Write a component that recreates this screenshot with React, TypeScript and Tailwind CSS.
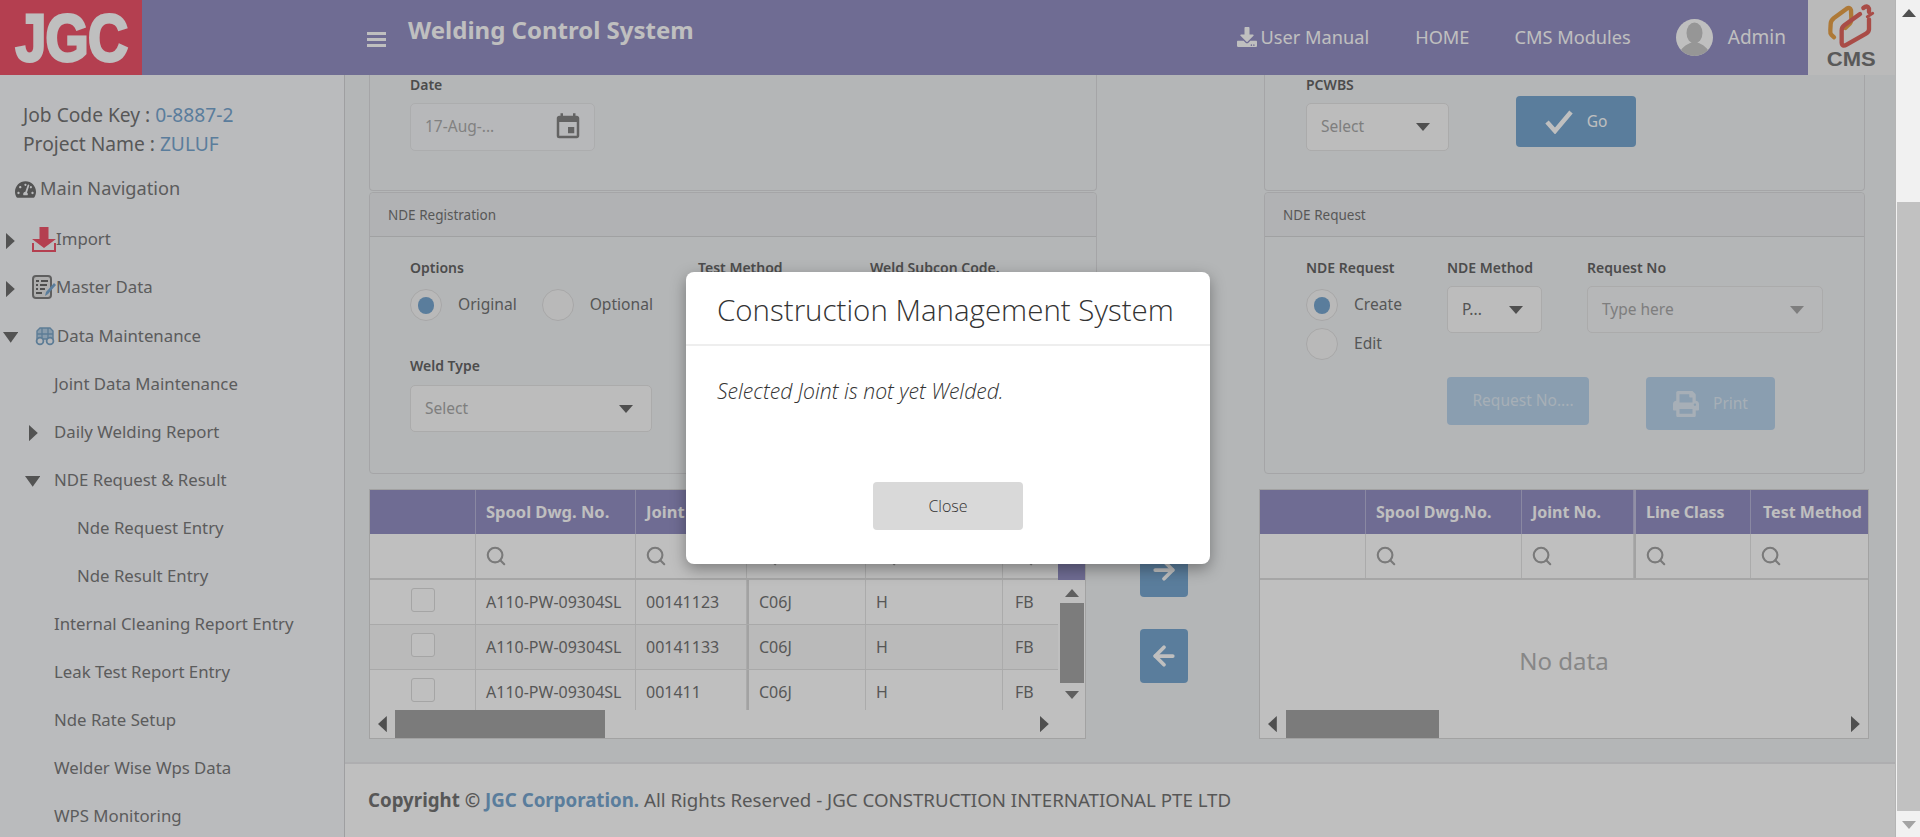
import React from "react";
import { FaTachometerAlt, FaDownload, FaPrint } from "react-icons/fa";
import { MdEvent } from "react-icons/md";
import { Search, ArrowLeft, ArrowRight } from "lucide-react";

const Tri = ({ dir, className, big }: { dir: "r" | "d" | "l" | "u"; className?: string; big?: boolean }) => {
  const pts = { r: "0,0 8,6 0,12", d: "0,0 14,0 7,8", l: "8,0 0,6 8,12", u: "7,0 14,8 0,8" }[dir];
  const w = dir === "r" || dir === "l" ? 8 : 14;
  const h = dir === "r" || dir === "l" ? 12 : 8;
  return (
    <svg width={big ? w * 1.1 : w} height={big ? h * 1.35 : h} viewBox={`0 0 ${w} ${h}`} preserveAspectRatio="none" className={className}>
      <polygon points={pts} fill="currentColor" />
    </svg>
  );
};

const ImportIcon = () => (
  <svg width="24" height="25" viewBox="0 0 24 25" className="shrink-0">
    <path d="M1 16v8h22v-8" fill="none" stroke="#f1556b" strokeWidth="2" />
    <path d="M7.5 0h9v12h7.5L12 21 0 12h7.5z" fill="#f1556b" />
  </svg>
);
const MasterIcon = () => (
  <svg width="24" height="24" viewBox="0 0 24 24" className="shrink-0">
    <rect x="1" y="1" width="18" height="22" rx="3" fill="#e8e8e8" stroke="#7f7f7f" strokeWidth="2" />
    <path d="M4 6h3M9 6h7M4 10h2M8 10h7M4 14h2M8 14h5M4 18h6" stroke="#6a6a6a" strokeWidth="1.8" />
    <path d="M13 21l1-4 8-9 2 2-8 9z" fill="#78a7d0" />
  </svg>
);
const TruckIcon = () => (
  <svg width="20" height="20" viewBox="0 0 20 20" className="shrink-0">
    <path d="M2 5l3-3h10l3 3v8H2z" fill="#b7d0e6" stroke="#7ca6c8" strokeWidth="1.4" />
    <path d="M7 2v11M13 2v11M2 8h16" stroke="#7ca6c8" strokeWidth="1.3" />
    <circle cx="5" cy="15" r="3.4" fill="#f3f5f8" stroke="#7ca6c8" strokeWidth="1.8" />
    <circle cx="15" cy="15" r="3.4" fill="#f3f5f8" stroke="#7ca6c8" strokeWidth="1.8" />
  </svg>
);
const CmsLogo = () => (
  <svg width="87" height="49" viewBox="84 0 261 147" fill="none" strokeWidth="13" strokeLinecap="round" strokeLinejoin="round">
    <path d="M162 112L154 104Q150 100 151 90L152 72Q152 62 162 54L200 26Q210 20 213 30L214 58Q214 68 206 74L196 84" stroke="#e8a24a" />
    <path d="M250 24Q262 14 267 26L267 36" stroke="#e2665f" />
    <path d="M278 40L262 50" stroke="#e2665f" strokeWidth="9" />
    <path d="M267 58L267 88Q267 96 258 101L200 134Q186 142 185 128L185 92Q185 82 193 76L240 42" stroke="#e2665f" />
  </svg>
);
const Avatar = () => (
  <svg width="37" height="37" viewBox="0 0 37 37" className="rounded-full">
    <rect width="37" height="37" fill="#ffffff" />
    <ellipse cx="18.5" cy="14" rx="8" ry="10.5" fill="#c9c9c9" />
    <path d="M3 37c1-9 8-11 11-13h9c3 2 10 4 11 13z" fill="#c9c9c9" />
  </svg>
);

const NavTop = ({ icon, label, open }: { icon: React.ReactNode; label: string; open?: boolean }) => (
  <div className={`h-12 flex items-center relative pl-[32px] text-[16.8px] ${open ? "" : "pb-[2px]"}`}>
    <span className={`absolute ${open ? "left-[3px] top-[20px]" : "left-[6px] top-[17px]"}`}>
      <Tri dir={open ? "d" : "r"} big className="text-[#6f6f6f]" />
    </span>
    {icon}
    <span>{label}</span>
  </div>
);
const NavSub = ({ label, level, arrow }: { label: string; level: 1 | 2; arrow?: "r" | "d" }) => (
  <div className={`h-12 flex items-center relative text-[16.8px] ${level === 1 ? "pl-[54px]" : "pl-[77px]"}`}>
    {arrow && (
      <span className={`absolute ${arrow === "r" ? "left-[29px] top-[17px]" : "left-[25px] top-[20px]"}`}>
        <Tri dir={arrow} big className="text-[#6f6f6f]" />
      </span>
    )}
    {label}
  </div>
);

const Sidebar = () => (
  <aside className="w-[345px] shrink-0 bg-[#f9fafd] border-r border-[#d4d5d7] text-[#7b7b7b] overflow-hidden">
    <div className="pt-[25px] pl-[23px] text-[19.2px] leading-[29px] text-[#757575]">
      <div>Job Code Key : <span className="text-[#78a7d0]">0-8887-2</span></div>
      <div>Project Name : <span className="text-[#78a7d0]">ZULUF</span></div>
    </div>
    <div className="mt-[15px] h-8 flex items-center pl-[15px] gap-[4px] text-[18.2px]">
      <FaTachometerAlt size={21} className="text-[#6f6f6f]" />
      <span>Main Navigation</span>
    </div>
    <div className="mt-[11px] h-[611px] overflow-hidden">
      <NavTop icon={<ImportIcon />} label="Import" />
      <NavTop icon={<MasterIcon />} label="Master Data" />
      <NavTop icon={<span className="ml-[3px] mr-[2px] flex"><TruckIcon /></span>} label="Data Maintenance" open />
      <NavSub level={1} label="Joint Data Maintenance" />
      <NavSub level={1} label="Daily Welding Report" arrow="r" />
      <NavSub level={1} label="NDE Request & Result" arrow="d" />
      <NavSub level={2} label="Nde Request Entry" />
      <NavSub level={2} label="Nde Result Entry" />
      <NavSub level={1} label="Internal Cleaning Report Entry" />
      <NavSub level={1} label="Leak Test Report Entry" />
      <NavSub level={1} label="Nde Rate Setup" />
      <NavSub level={1} label="Welder Wise Wps Data" />
      <NavSub level={1} label="WPS Monitoring" />
    </div>
  </aside>
);

const Label = ({ children }: { children: React.ReactNode }) => (
  <div className="h-5 leading-5 text-[14px] font-semibold text-[#666] whitespace-nowrap">{children}</div>
);
const Radio = ({ on, label }: { on?: boolean; label: string }) => (
  <div className="flex items-center gap-[16px] text-[15.6px] text-[#737373]">
    <span className="w-8 h-8 rounded-full border border-[#e0e0e0] bg-[#f7f7f7] flex items-center justify-center">
      {on && <span className="w-[16px] h-[17px] rounded-full bg-[#78a7d0]" />}
    </span>
    <span>{label}</span>
  </div>
);
const SelectBox = ({ text, w, dim, dark }: { text: string; w: string; dim?: boolean; dark?: boolean }) => (
  <div className={`${w} h-[47px] rounded-[5px] border border-[#e4e4e4] flex items-center justify-between pl-[14px] pr-[18px] text-[15.5px] ${dim ? "bg-[#f3f4f6]" : "bg-[#fbfbfb]"} ${dark ? "text-[#6f6f6f]" : "text-[#a9a9a9]"}`}>
    <span>{text}</span>
    <Tri dir="d" className={dim ? "text-[#a9a9a9]" : "text-[#6a6a6a]"} />
  </div>
);

const Panel = ({ title, w, children }: { title: string; w: string; children: React.ReactNode }) => (
  <section className={`${w} h-[282px] border border-[#dcdddf] rounded-[4px]`}>
    <div className="h-[44px] border-b border-[#d6d7d9] bg-[#eceef0] flex items-center pl-[18px] pt-[2px] text-[13.5px] text-[#757575] rounded-t-[4px]">{title}</div>
    {children}
  </section>
);

const leftCols = ["", "Spool Dwg. No.", "Joint No.", "Line Class", "Test Method", "Type"];
const leftTemplate = "grid grid-cols-[106px_160px_111px_119px_137px_56px]";
const rows = [
  ["A110-PW-09304SL", "00141123", "C06J", "H", "FB"],
  ["A110-PW-09304SL", "00141133", "C06J", "H", "FB"],
  ["A110-PW-09304SL", "001411", "C06J", "H", "FB"],
];

const HScroll = ({ thumb, ml, mr }: { thumb: string; ml: string; mr: string }) => (
  <div className="h-[28px] flex items-center relative">
    <Tri dir="l" big className="text-[#6a6a6a] ml-[8px]" />
    <div className={`${thumb} ${ml} h-[28px] bg-[#a5a5a5]`} />
    <Tri dir="r" big className={`text-[#6a6a6a] ml-auto ${mr}`} />
  </div>
);

const SearchCell = ({ show }: { show: boolean }) =>
  show ? <Search size={22} strokeWidth={2.3} className="text-[#a3a3a3] -ml-[1px]" /> : null;

const LeftTable = () => (
  <div className="w-[717px] h-[250px] border border-[#d9d9d9] bg-white overflow-hidden flex flex-col text-[16px] text-[#757575]">
    <div className="flex h-[220px] shrink-0">
      <div className="w-[688px] overflow-hidden">
        <div className={`${leftTemplate} h-[44px] bg-[#9590c5] text-[#fff] text-[16.5px] font-bold`}>
          {leftCols.map((c, i) => (
            <div key={i} className="border-r border-[#b9b6d8] flex items-center pl-[10px] whitespace-nowrap overflow-hidden">{c}</div>
          ))}
        </div>
        <div className={`${leftTemplate} h-[46px] border-b-2 border-[#dedede]`}>
          {leftCols.map((_, i) => (
            <div key={i} className="border-r border-[#e4e4e4] flex items-center pl-[10px]">
              <SearchCell show={i > 0} />
            </div>
          ))}
        </div>
        {rows.map((r, i) => (
          <div key={i} className={`${leftTemplate} h-[45px] border-b border-[#e2e2e2] ${i === 1 ? "bg-[#f8f8f8]" : ""}`}>
            <div className="border-r border-[#e4e4e4] flex items-center justify-center pb-[4px]">
              <span className="w-6 h-6 rounded-[3px] border border-[#dcdcdc] bg-white" />
            </div>
            {r.map((c, j) => (
              <div key={j} className={`border-r border-[#e4e4e4] flex items-center whitespace-nowrap ${j === 4 ? "pl-[12px]" : "pl-[10px]"} ${j === 2 ? "border-l-2 border-l-[#d8d8d8]" : ""}`}>{c}</div>
            ))}
          </div>
        ))}
      </div>
      <div className="w-[27px] flex flex-col items-center">
        <div className="h-[90px] w-full bg-[#9590c5]" />
        <Tri dir="u" className="text-[#7f7f7f] mt-[9px] mb-[6px]" />
        <div className="w-6 h-[80px] bg-[#a6a6a6]" />
        <Tri dir="d" className="text-[#7f7f7f] mt-[8px]" />
      </div>
    </div>
    <HScroll thumb="w-[210px]" ml="ml-[8px]" mr="mr-[36px]" />
  </div>
);

const RightTable = () => {
  const tpl = "grid grid-cols-[106px_156px_112px_117px_117px]";
  const cols = ["", "Spool Dwg.No.", "Joint No.", "Line Class", "Test Method"];
  return (
    <div className="w-[610px] h-[250px] border border-[#d9d9d9] bg-white overflow-hidden flex flex-col text-[16px]">
      <div className={`${tpl} h-[44px] shrink-0 bg-[#9590c5] text-white font-bold`}>
        {cols.map((c, i) => (
          <div key={i} className={`border-r border-[#b9b6d8] last:border-r-0 flex items-center whitespace-nowrap ${i === 4 ? "pl-[12px]" : "pl-[10px]"} ${i === 3 ? "border-l-2 border-l-[#c3c1de]" : ""}`}>{c}</div>
        ))}
      </div>
      <div className={`${tpl} h-[46px] shrink-0 border-b-2 border-[#dedede]`}>
        {cols.map((_, i) => (
          <div key={i} className={`border-r border-[#e4e4e4] last:border-r-0 flex items-center pl-[10px] ${i === 3 ? "border-l-2 border-l-[#d8d8d8]" : ""}`}>
            <SearchCell show={i > 0} />
          </div>
        ))}
      </div>
      <div className="h-[130px] shrink-0 flex items-center justify-center text-[24px] text-[#b4b4b4] pt-[32px]">No data</div>
      <HScroll thumb="w-[153px]" ml="ml-[9px]" mr="mr-[8px]" />
    </div>
  );
};

const Main = () => (
  <main className="flex-1 min-w-0 flex flex-col bg-[#f1f3f5]">
    <div className="flex-1 flex flex-col pl-[24px]">
      <div className="flex gap-[167px] h-[116px]">
        <section className="w-[728px] border border-t-0 border-[#dcdddf] rounded-b-[4px] pl-[40px]">
          <Label>Date</Label>
          <div className="mt-[8px] w-[185px] h-[48px] rounded-[5px] border border-[#e6e7e9] bg-[#f5f6f8] flex items-center justify-between pl-[14px] pr-[11px] text-[15.5px] text-[#adadad]">
            <span>17-Aug-...</span>
            <MdEvent size={30} className="text-[#858585]" />
          </div>
        </section>
        <section className="w-[601px] border border-t-0 border-[#dcdddf] rounded-b-[4px] pl-[41px] flex">
          <div className="w-[210px]">
            <Label>PCWBS</Label>
            <SelectBox text="Select" w="w-[143px] mt-[8px] !h-[48px]" />
          </div>
          <button className="mt-[21px] w-[120px] h-[51px] rounded-[4px] bg-[#78a7d0] text-white flex items-center justify-center gap-[14px] text-[15.5px]">
            <svg width="28" height="24" viewBox="0 0 28 24" fill="none" stroke="white" strokeWidth="4.5"><path d="M2 12l8 9L26 2" /></svg>
            <span>Go</span>
          </button>
        </section>
      </div>
      <div className="flex gap-[167px] mt-px">
        <Panel title="NDE Registration" w="w-[728px]">
          <div className="pt-[21px] pl-[40px]">
            <div className="flex">
              <div className="w-[288px]">
                <Label>Options</Label>
                <div className="mt-[11px] flex gap-[25px]">
                  <Radio on label="Original" />
                  <Radio label="Optional" />
                </div>
              </div>
              <div className="w-[172px]"><Label>Test Method</Label></div>
              <div><Label>Weld Subcon Code.</Label></div>
            </div>
            <div className="mt-[35px]">
              <Label>Weld Type</Label>
              <SelectBox text="Select" w="w-[242px] mt-[9px]" />
            </div>
          </div>
        </Panel>
        <Panel title="NDE Request" w="w-[601px]">
          <div className="pt-[21px] pl-[41px] flex">
            <div className="w-[141px]">
              <Label>NDE Request</Label>
              <div className="mt-[11px] flex flex-col gap-[7px]">
                <Radio on label="Create" />
                <Radio label="Edit" />
              </div>
            </div>
            <div>
              <div className="flex">
                <div className="w-[140px]">
                  <Label>NDE Method</Label>
                  <SelectBox text="P..." w="w-[95px] mt-[8px]" dark />
                </div>
                <div>
                  <Label>Request No</Label>
                  <SelectBox text="Type here" w="w-[236px] mt-[8px]" dim />
                </div>
              </div>
              <div className="flex mt-[44px] items-start">
                <button className="w-[142px] h-[48px] rounded-[4px] bg-[#b8d3eb] text-[#dfeaf4] text-[15.5px] pl-[10px] whitespace-nowrap">Request No....</button>
                <button className="ml-[57px] w-[129px] h-[53px] rounded-[4px] bg-[#b8d3eb] text-[#dfeaf4] text-[15.5px] flex items-center justify-center gap-[14px]">
                  <FaPrint size={26} />
                  <span>Print</span>
                </button>
              </div>
            </div>
          </div>
        </Panel>
      </div>
      <div className="flex mt-[15px]">
        <LeftTable />
        <div className="w-[173px] pl-[54px] pt-[54px] flex flex-col gap-[32px]">
          <div className="w-12 h-[54px] rounded-[4px] bg-[#78a7d0] text-white flex items-center justify-center"><ArrowRight size={30} strokeWidth={3} /></div>
          <div className="w-12 h-[54px] rounded-[4px] bg-[#78a7d0] text-white flex items-center justify-center"><ArrowLeft size={30} strokeWidth={3} /></div>
        </div>
        <RightTable />
      </div>
    </div>
    <footer className="h-[75px] shrink-0 bg-white border-t-2 border-[#e8e9eb] flex items-center pl-[23px] text-[18.7px] text-[#757575]">
      <span className="font-bold">Copyright © <span className="text-[#78a7d0]">JGC Corporation.</span></span>
      <span>&nbsp;All Rights Reserved - JGC CONSTRUCTION INTERNATIONAL PTE LTD</span>
    </footer>
  </main>
);

const TopBar = () => (
  <div className="w-full h-[75px] shrink-0 bg-[#9590c5] flex items-center text-white">
    <div className="w-[142px] h-[75px] bg-[#f1556b] flex items-center justify-center overflow-hidden">
      <span className="text-[66px] leading-none font-bold tracking-[-1px] scale-x-[.84] [-webkit-text-stroke:3px_white] font-['Liberation_Sans',sans-serif]">JGC</span>
    </div>
    <div className="ml-[225px] w-[19px] flex flex-col gap-[3px] pt-[3px]">
      <span className="h-[3px] bg-white" /><span className="h-[3px] bg-white" /><span className="h-[3px] bg-white" />
    </div>
    <div className="ml-[22px] text-[24px] font-bold pb-[16px] whitespace-nowrap">Welding Control System</div>
    <div className="ml-auto flex items-center text-[18.2px] h-full">
      <div className="flex items-center gap-[4px]"><FaDownload size={20} /><span>User Manual</span></div>
      <div className="ml-[46px]">HOME</div>
      <div className="ml-[45px]">CMS Modules</div>
      <div className="ml-[45px]"><Avatar /></div>
      <div className="ml-[15px] mr-[22px] text-[19px]">Admin</div>
      <div className="w-[87px] h-full bg-[#f8f8f8] flex flex-col items-center justify-start">
        <CmsLogo />
        <span className="text-[#777] font-bold text-[20px] leading-[20px] font-['Liberation_Sans',sans-serif] scale-x-110">CMS</span>
      </div>
    </div>
  </div>
);

const PageScrollbar = () => (
  <div className="w-[25px] shrink-0 h-[837px] bg-[#f1f1f1] flex flex-col pl-[2px]">
    <div className="h-[202px] flex justify-center pt-[9px]"><Tri dir="u" className="text-[#505050]" /></div>
    <div className="h-[609px] bg-[#c1c1c1]" />
    <div className="flex-1 flex justify-center pt-[10px]"><Tri dir="d" className="text-[#a3a3a3]" /></div>
  </div>
);

const Modal = () => (
  <div className="absolute left-0 top-0 w-[1896px] h-[837px] bg-black/25 flex justify-center items-start pt-[272px]">
    <div className="w-[524px] h-[292px] bg-white rounded-[8px] shadow-[0_5px_15px_rgba(0,0,0,0.35)] flex flex-col font-['Open_Sans',sans-serif] text-[#333]">
      <div className="h-[74px] border-b-2 border-[#eeeeee] pl-[31px] pt-[4px] flex items-center text-[29.5px] font-light whitespace-nowrap">Construction Management System</div>
      <div className="h-[136px] pl-[31px] pt-[30px] text-[21.2px] italic font-light leading-[30px]">Selected Joint is not yet Welded.</div>
      <div className="flex justify-center">
        <button className="w-[150px] h-[48px] rounded-[4px] bg-[#d9d9d9] text-[16px] font-light">Close</button>
      </div>
    </div>
  </div>
);

export default function App() {
  return (
    <div className="relative w-full h-[837px] overflow-hidden flex font-['Noto_Sans',sans-serif] bg-white">
      <div className="flex-1 min-w-0 flex flex-col h-[837px]">
        <TopBar />
        <div className="flex flex-1 min-h-0">
          <Sidebar />
          <Main />
        </div>
      </div>
      <PageScrollbar />
      <Modal />
    </div>
  );
}
